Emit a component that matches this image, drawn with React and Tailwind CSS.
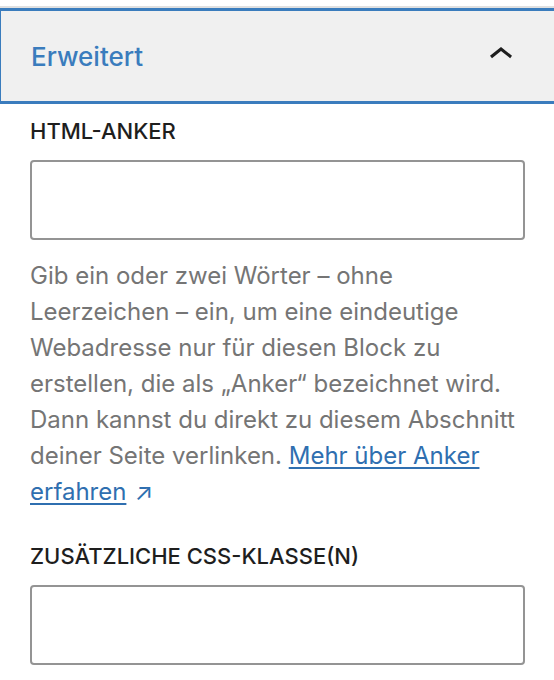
import React from "react";

const font = { fontFamily: "Inter, 'Noto Sans', sans-serif" };

const ChevronUp = () => (
  <svg width="48" height="48" viewBox="0 0 24 24" className="fill-[#1e1e1e] -mt-[2px]">
    <path d="M6.5 12.4L12 8l5.5 4.4-.9 1.2L12 10l-4.5 3.6-1-1.2z" />
  </svg>
);

const Field = ({ label }) => (
  <div>
    <label className="block text-[22px] leading-[30px] font-medium uppercase text-[#1e1e1e]">{label}</label>
    <input type="text" className="mt-[14px] block w-full h-[80px] rounded-[4px] border-2 border-[#949494] bg-white outline-none" />
  </div>
);

export default function App() {
  return (
    <div className="w-[554px] h-[680px] overflow-hidden bg-white pt-[6px]" style={font}>
      <div className="border-t-2 border-[#e0e0e0]">
        {/* panel header, focused */}
        <button className="-ml-[2px] w-[calc(100%+5px)] h-[96px] flex items-center justify-between bg-[#f0f0f0] border-[3px] border-[#3a7cbd] pl-[30px] pr-[29px]">
          <span className="text-[26px] font-medium text-[#3a7cbd]">Erweitert</span>
          <ChevronUp />
        </button>

        <div className="pl-[30px] pr-[29px] pt-[12px]">
          <Field label="HTML-Anker" />
          <p className="mt-[18px] text-[24px] leading-[36px] text-[#757575]">
            Gib ein oder zwei Wörter – ohne Leerzeichen – ein, um eine eindeutige Webadresse nur für diesen Block zu erstellen, die als „Anker“ bezeichnet wird. Dann kannst du direkt zu diesem Abschnitt deiner Seite verlinken.{" "}
            <a href="#" className="text-[#2f6fb0] underline underline-offset-[3px]">
              Mehr über Anker erfahren
            </a>
            <span className="ml-[8px] text-[#2f6fb0]">↗</span>
          </p>

          <div className="mt-[31px]">
            <Field label="Zusätzliche CSS-Klasse(n)" />
          </div>
        </div>
      </div>
    </div>
  );
}
